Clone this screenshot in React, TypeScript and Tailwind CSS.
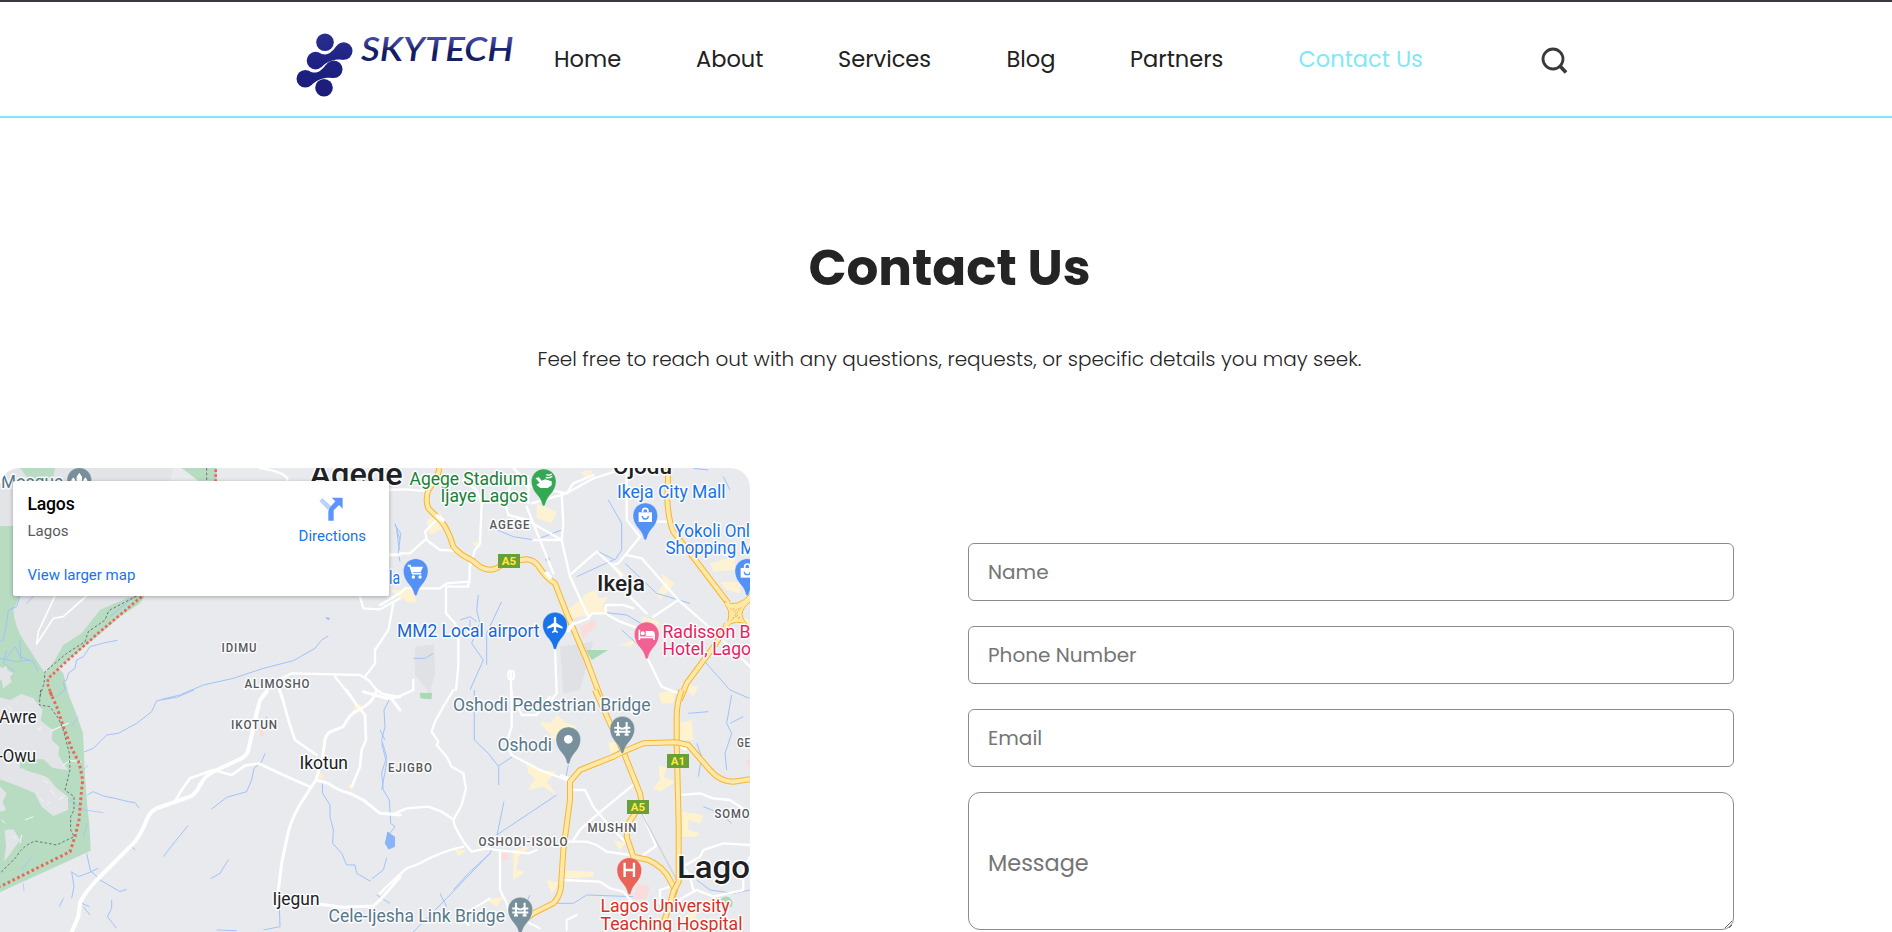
import type { ReactNode } from "react";

const POPPINS = "font-['Poppins','Inter',sans-serif]";

/* ---------- header ---------- */

function Logo() {
  return (
    <svg width="230" height="76" viewBox="290 26 230 76" className="block">
      <defs>
        <linearGradient id="mark" gradientUnits="userSpaceOnUse" x1="0" y1="33" x2="0" y2="97">
          <stop offset="0" stopColor="#2a2e90" />
          <stop offset="0.5" stopColor="#1d2180" />
          <stop offset="1" stopColor="#1a1e78" />
        </linearGradient>
        <linearGradient id="word" gradientUnits="userSpaceOnUse" x1="0" y1="36" x2="0" y2="62">
          <stop offset="0" stopColor="#4a4eaa" />
          <stop offset="0.3" stopColor="#34398f" />
          <stop offset="0.6" stopColor="#111a5e" />
          <stop offset="1" stopColor="#1b2168" />
        </linearGradient>
      </defs>
      <g fill="url(#mark)">
        <circle cx="325" cy="42.2" r="8.8" />
        <circle cx="324" cy="87.8" r="8.8" />
        <circle cx="343.7" cy="51" r="8.8" />
        <circle cx="315.5" cy="60.6" r="8.8" />
        <path d="M318 52.2C326 56.500 330 54.500 336.500 46L343.700 59.800C334 59 329 60.500 321 67.400Z" />
        <circle cx="333.7" cy="69.2" r="8.800" />
        <circle cx="305.3" cy="78.800" r="8.800" />
        <path d="M307.800 70.400C315.800 74.700 319.800 72.700 326.300 64.200L333.500 78C323.800 77.200 318.800 78.700 310.800 85.600Z" />
      </g>
      <text
        x="361"
        y="60.8"
        textLength="152.5"
        lengthAdjust="spacingAndGlyphs"
        fill="url(#word)"
        className="font-['Lato',sans-serif] text-[33px] font-semibold italic"
      >
        SKYTECH
      </text>
    </svg>
  );
}

const NAV = [
  { label: "Home", cls: "w-[142px] text-[#212121]" },
  { label: "About", cls: "w-[142px] text-[#212121]" },
  { label: "Services", cls: "w-[168.500px] text-[#212121]" },
  { label: "Blog", cls: "w-[123.500px] text-[#212121]" },
  { label: "Partners", cls: "w-[168.500px] text-[#212121]" },
  { label: "Contact Us", cls: "w-[242.500px] text-[#7de8fa]" },
];

function Header() {
  return (
    <header className="flex h-[118px] border-t-2 border-b-2 border-t-[#3b3841] border-b-[#7de8fa] pl-[290px]">
      <div className="mt-[24px] w-[264px] shrink-0">
        <Logo />
      </div>
      <nav className={`flex h-[114px] items-center pt-[2px] text-[22.500px] ${POPPINS}`}>
        {NAV.map((n) => (
          <a key={n.label} className={`block shrink-0 whitespace-nowrap ${n.cls}`}>
            {n.label}
          </a>
        ))}
      </nav>
      <svg width="28" height="28" viewBox="0 0 28 28" className="mt-[44px] block" fill="none" stroke="#3a3a3a">
        <circle cx="12" cy="13" r="10" strokeWidth="2.800" />
        <path d="M19 20L25 26.500" strokeWidth="3.600" />
      </svg>
    </header>
  );
}

/* ---------- map ---------- */

/* One quarter of the map, drawn at three units per pixel. */
function Tile({ x, y, children }: { x: number; y: number; children: ReactNode }) {
  return <g transform={`translate(${x} ${y}) scale(0.33333)`}>{children}</g>;
}

function Highway({ d, w = 18 }: { d: string; w?: number }) {
  return (
    <>
      <path d={d} stroke="#f9b52f" strokeWidth={w} fill="none" />
      <path d={d} stroke="#ffe8a8" strokeWidth={w - 6} fill="none" />
    </>
  );
}

function Pin({ x, y, color, children }: { x: number; y: number; color: string; children?: ReactNode }) {
  return (
    <g transform={`translate(${x} ${y}) scale(0.33333)`}>
      <path
        d="M0 74C-6 74 -4 62 -14 48C-22 37 -37 24 -37 0A37 37 0 0 1 37 0C37 24 22 37 14 48C4 62 6 74 0 74Z"
        fill={color}
        stroke="#fff"
        strokeOpacity="0.5"
        strokeWidth="2"
      />
      {children}
    </g>
  );
}

const BridgeGlyph = () => (
  <path
    d="M-13 -20V19M13 -20V19M-24 9H24M-13 -6Q0 6 13 -6M-24 -3H-13M13 -3H24M-19 18H-7M7 18H19"
    fill="none"
    stroke="#fff"
    strokeWidth="6"
  />
);

const BagGlyph = () => (
  <g>
    <path d="M-20 -9H20V20H-20Z" fill="#fff" />
    <path d="M-8 -9V-13A8 8 0 0 1 8 -13V-9" fill="none" stroke="#fff" strokeWidth="5" />
    <path d="M-9 2A9 9 0 0 0 9 2" fill="none" stroke="#5491f5" strokeWidth="4" />
  </g>
);

type Label = { t: string; x: number; y: number; w: number; k: keyof typeof KINDS };

const KINDS = {
  green: "fill-[#188038] text-[17.600px]",
  blue: "fill-[#1a73e8] text-[17.600px]",
  navy: "fill-[#1967d2] text-[17.600px]",
  pink: "fill-[#e91e63] text-[17.600px]",
  red: "fill-[#d93025] text-[17.600px]",
  slate: "fill-[#57788a] text-[17.600px]",
  area: "fill-[#55585c] text-[12px] font-medium tracking-[1px]",
  town: "fill-[#202124] text-[17.800px]",
  city: "fill-[#202124] text-[22px] font-medium",
  big: "fill-[#202124] text-[32px] font-medium",
};

const LABELS: Label[] = [
  { t: "Mosque", x: 1, y: 488, w: 62, k: "slate" },
  { t: "Agege", x: 309.5, y: 484.5, w: 93, k: "big" },
  { t: "Ojodu", x: 613, y: 474, w: 59, k: "city" },
  { t: "Agege Stadium", x: 409.5, y: 484.7, w: 118.5, k: "green" },
  { t: "Ijaye Lagos", x: 440.5, y: 502, w: 87.5, k: "green" },
  { t: "AGEGE", x: 489.5, y: 529, w: 41, k: "area" },
  { t: "Ikeja City Mall", x: 617, y: 498, w: 108.5, k: "blue" },
  { t: "Yokoli Onl", x: 674.5, y: 536.7, w: 75.5, k: "blue" },
  { t: "Shopping M", x: 665.5, y: 554.3, w: 89.5, k: "blue" },
  { t: "Ikeja", x: 597, y: 591, w: 48, k: "city" },
  { t: "la", x: 389, y: 583.7, w: 11, k: "blue" },
  { t: "MM2 Local airport", x: 397, y: 637, w: 142.5, k: "navy" },
  { t: "Radisson B", x: 662.5, y: 638, w: 88, k: "pink" },
  { t: "Hotel, Lago", x: 662.5, y: 655.3, w: 88.5, k: "pink" },
  { t: "IDIMU", x: 221.5, y: 652.3, w: 36, k: "area" },
  { t: "ALIMOSHO", x: 244.5, y: 688.2, w: 66, k: "area" },
  { t: "IKOTUN", x: 231, y: 729.4, w: 47, k: "area" },
  { t: "EJIGBO", x: 388, y: 772, w: 45, k: "area" },
  { t: "Awre", x: -1, y: 722.5, w: 37.5, k: "town" },
  { t: "-Owu", x: -2, y: 761.5, w: 38, k: "town" },
  { t: "Ikotun", x: 299.5, y: 768.5, w: 48.5, k: "town" },
  { t: "Ijegun", x: 272.5, y: 904.5, w: 47, k: "town" },
  { t: "Cele-Ijesha Link Bridge", x: 328.5, y: 922.3, w: 176.5, k: "slate" },
  { t: "Oshodi Pedestrian Bridge", x: 453, y: 710.9, w: 197.5, k: "slate" },
  { t: "Oshodi", x: 497.5, y: 751.3, w: 54.5, k: "slate" },
  { t: "OSHODI-ISOLO", x: 478.5, y: 846.4, w: 90, k: "area" },
  { t: "MUSHIN", x: 587.5, y: 832, w: 50, k: "area" },
  { t: "SOMO", x: 714.5, y: 817.5, w: 36, k: "area" },
  { t: "GE", x: 737, y: 747.2, w: 14, k: "area" },
  { t: "Lago", x: 677, y: 878.2, w: 73, k: "big" },
  { t: "Lagos University", x: 600.5, y: 912.3, w: 129, k: "red" },
  { t: "Teaching Hospital", x: 600.5, y: 929.7, w: 142, k: "red" },
];

function Badge({ x, y, t }: { x: number; y: number; t: string }) {
  return (
    <g>
      <rect x={x} y={y} width="22" height="14" fill="#689f38" />
      <text
        x={x + 11}
        y={y + 11}
        textAnchor="middle"
        className="fill-[#ffeb3b] font-['Roboto',sans-serif] text-[11.500px] font-bold"
      >
        {t}
      </text>
    </g>
  );
}

function MapCanvas() {
  return (
    <svg width="750" height="464" viewBox="0 468 750 464" className="block" strokeLinejoin="round">
      <rect x="0" y="468" width="750" height="464" fill="#e8eaed" />

      {/* terrain */}
      <Tile x={0} y={460}>
        <path d="M0 24H520L480 200L420 408L260 540L160 640L0 620Z" fill="#e3e4e8" />
        <path d="M0 198H60V408L40 450Q44 500 70 540L115 610L135 640L165 600L190 555L245 520L300 450L380 415L440 400L420 430L360 470L290 530L175 625L190 640L210 720H0V660L20 640L10 620L0 640Z" fill="#b7dcc1" />
        <path d="M545 24H650V62H595ZM60 24H165L160 50L130 62L80 50Z" fill="#b7dcc1" />
        <path d="M0 640L18 615L35 665L10 685ZM40 715L75 700L125 720Z" fill="#e3e4e8" />
        <path d="M0 660L30 650L40 640L0 620Z" fill="#e3e4e8" />
      </Tile>
      <Tile x={0} y={690}>
        <path d="M0 0H200L228 70L249 130L255 260L262 350L268 400L272 482L0 607Z" fill="#b7dcc1" />
        <path d="M0 22L30 30L65 12L100 25L128 60L122 92L158 120L155 150L178 170L175 195L190 220L205 240L150 235L130 215L60 210L60 235L110 240L145 265L170 290L204 320V360L160 378L125 350L105 310L60 290L0 268Z" fill="#e3e4e8" />
        <path d="M60 208H130L155 232L190 240L205 290L204 320L165 290L145 262L75 240Z" fill="#b7dcc1" />
        <path d="M0 290L20 310L8 335L18 360L0 365ZM14 420L40 418L60 450L35 485L12 515L18 470Z" fill="#e3e4e8" />
        <path d="M112 118L125 112M118 125L122 120M25 48L35 58L30 65M130 270L145 280M150 300L165 315M175 330L190 320M120 325L130 335M140 345L150 335M40 440L50 445M5 390L15 400M65 435L60 460M75 390L100 380" fill="none" stroke="#f4f5f6" strokeWidth="3" />
      </Tile>

      {/* built-up patches */}
      <Tile x={380} y={460}>
        <path d="M105 560L162 553L165 640L150 700L105 645ZM540 560L640 545L600 690L550 700Z" fill="#dfe1e5" />
        <path d="M618 570L685 570L635 600ZM120 700L155 698V718L122 715Z" fill="#a9dab5" />
        <path d="M600 500L640 480L650 495L610 535Z" fill="#fbdcdc" />
        <path d="M575 440L600 420L620 400L650 390L655 415L685 410L665 440L690 450L660 462L625 465L580 475L550 455ZM470 130L530 155L515 190L470 175ZM845 340L885 370L840 420L830 400L850 375ZM990 310L1065 290V330L1000 335ZM1020 365H1080V400L1040 390ZM790 470L840 485L820 520L780 505ZM720 555L785 530L750 560ZM30 390L100 390L110 430L80 425ZM140 180L180 160L200 200L150 225ZM275 250L305 240L300 265ZM600 35L640 30L625 60ZM1080 470L1110 480V520ZM900 670L955 680L940 710ZM700 310L740 350L715 345Z" fill="#fff3cf" opacity="0.9" />
      </Tile>
      <Tile x={380} y={690}>
        <path d="M480 95L515 98L530 75L560 100L590 110L575 145L550 130L520 150L510 130L485 105ZM440 225L490 240L530 245L500 275L530 315L490 290L445 300L465 265L445 250ZM835 225L860 235L850 260L885 275L840 305L820 295L840 270ZM905 365L970 375L960 400L925 390L925 420L960 430L950 440L905 440ZM400 480L450 470L415 500L410 540L435 545L400 570ZM530 540L640 545V560L560 565ZM500 570L540 580L515 610ZM900 100L935 90L940 150L900 150ZM835 10L885 0L880 40L845 40ZM700 450L735 460L720 480ZM685 155L715 160V190L690 185ZM225 480L260 480L235 500ZM320 630L370 620L350 650ZM900 690L950 650L945 700Z" fill="#fff3cf" />
        <path d="M360 490H385V510L365 512ZM770 580L810 590L800 625L760 630ZM1095 215L1110 205V240Z" fill="#fbdcdc" />
        <path d="M120 8L158 10L150 28L122 24ZM1020 630A20 20 0 0 1 1055 650L1030 660Z" fill="#a9dab5" />
      </Tile>
      <Tile x={0} y={690}>
        <path d="M955 245L975 262L950 270ZM1062 45L1080 40L1092 65L1060 68ZM1045 280L1060 290L1050 305Z" fill="#ffeecb" />
        <path d="M777 120H792V138L780 140Z" fill="#fbdcdc" />
      </Tile>

      {/* water */}
      <Tile x={0} y={460}>
        <g fill="none" stroke="#a1c2fa" strokeWidth="3">
          <path d="M485 718L540 705L610 675L700 655L790 625L880 602L945 565L965 540L985 528" />
          <path d="M352 541L315 548L270 560L250 590L230 600L225 625L205 640L200 660L190 665L195 690L170 710" />
          <path d="M60 408L50 440L25 450L20 490L10 540L0 545M15 600L45 560L60 590L100 605L115 635M0 595L50 605L90 600M20 570L10 610L45 635M60 540L62 600" />
          <path d="M1185 190L1200 240M1198 270L1190 210" />
          <path d="M405 408L330 470M100 408L80 430" />
        </g>
        <path d="M975 472L990 474L985 480ZM1025 482L1033 477Z" fill="#8ab4f8" />
      </Tile>
      <Tile x={380} y={460}>
        <g fill="none" stroke="#a1c2fa" strokeWidth="3">
          <path d="M45 195L62 220L55 280L60 305M340 205L400 230L465 240L545 210M685 120L725 190V270L705 300L655 275M365 425L320 520V615M295 405L290 450L300 490L275 550L310 600L270 690M240 480L270 470L290 485M100 595L135 595L160 580" />
          <path d="M680 458L740 465L800 500M735 310L830 400L930 430M870 555L960 560L970 600L1050 690L1108 715M940 25L985 30M1030 50L1050 90M590 350L700 300M270 480V520" />
          <path d="M725 510L770 550" />
        </g>
        <circle cx="503" cy="298" r="6" fill="#8ab4f8" />
      </Tile>
      <Tile x={0} y={690}>
        <g fill="none" stroke="#a1c2fa" strokeWidth="3">
          <path d="M582 0L530 22L470 32L455 65L410 100L355 130L320 135L280 175L252 186" />
          <path d="M262 315L280 305L310 318L345 325L385 335L405 338L418 355" />
          <path d="M795 190L785 215L762 235L755 270L740 305L680 322L635 357" />
          <path d="M564 407L525 455L490 500M686 508L660 550L632 566M397 472L406 480" />
          <path d="M967 280L968 310L990 345L990 380L1000 420L998 460L1025 490L1040 525L1065 525L1070 550L1112 574" />
          <path d="M1170 25L1152 60L1155 110L1145 150L1160 200L1145 250L1150 300L1168 330L1172 400L1185 410L1170 430M1160 503L1150 540L1115 567" />
          <path d="M215 545L235 560L275 545L300 570L360 605L380 598M215 545L222 590L215 625M260 490L272 545L295 535M190 625L178 650M245 640L268 650M250 650L270 675M335 630V655L322 680L350 715M838 650L840 710L790 720M650 720L710 722M800 80L795 110" />
          <path d="M205 330L255 360L310 368M235 80L215 110M265 225L245 245M250 440L262 400M70 580L72 605M95 500L65 540" opacity="0.7" />
          <path d="M1130 615L1170 640" />
        </g>
        <path d="M1165 425L1180 440V470L1165 478L1155 460Z" fill="#8ab4f8" />
      </Tile>
      <Tile x={380} y={690}>
        <g fill="none" stroke="#a1c2fa" strokeWidth="3">
          <path d="M283 0V150L325 190L356 230V285M356 228L405 195M565 225L558 260M530 315L350 435M372 335L350 440L330 490L200 625L100 726" />
          <path d="M330 490L265 550L220 600M500 640L580 640L620 615L760 620M450 615L420 680M200 650L180 610M1055 15L1040 100L1055 130L1035 190L1040 240M950 160L965 200L955 260M925 70L985 65M1050 100L1090 80M1110 600L1060 610L990 600L950 570M970 350L1020 370L1055 400M0 120L15 150M5 160L20 220L5 300" />
        </g>
        <path d="M22 425L45 440V470L28 478L15 460Z" fill="#8ab4f8" />
      </Tile>

      {/* local roads */}
      <Tile x={0} y={460}>
        <g fill="none" stroke="#fff" strokeLinecap="round">
          <path d="M780 24Q850 35 862 55V64M1080 410L1090 445L1140 448L1200 415M1180 430L1165 510L1125 570V610L1095 650" strokeWidth="7" />
          <path d="M780 720Q800 680 845 655L875 640L1080 645L1105 660L1130 690L1170 715M1005 650L1060 720M840 690L850 720" strokeWidth="7" />
          <path d="M1168 282H1200M260 408L190 470L160 475L110 552L115 515L165 408" strokeWidth="5" />
        </g>
        <path d="M620 24V60M410 408L330 450L325 455L315 480L265 515L255 545L200 580L135 635L132 670L118 715" fill="none" stroke="#6c7176" strokeWidth="3" strokeDasharray="8 6" />
        <path d="M425 410L300 515L215 590L145 655L142 670L158 715M647 28V64" fill="none" stroke="#e8685a" strokeWidth="8" strokeDasharray="8 7" />
      </Tile>
      <Tile x={380} y={460}>
        <g fill="none" stroke="#fff" strokeLinecap="round">
          <path d="M0 90L80 88L150 95M150 60L130 45M60 280H90L140 235L135 215L180 170M140 240L180 270L225 272M0 285H60M0 435L60 400L75 385H180L200 370L265 365V380H198V460L225 490L235 540V620L228 690M270 310L268 370M250 60L290 90L305 130L300 250L285 270L270 320M400 24L455 80L560 100L640 55L740 24M545 100L550 190L545 240L570 350L625 470M375 130L385 165L440 180L545 240M440 140L480 240L520 340M460 240H545M740 24V180L780 230L740 280L715 310L695 315L650 275L575 340M690 310L720 340L740 400L800 460M740 285L785 295L895 420L820 470M895 420L975 490L1110 620M575 495L625 475L635 460H675L720 485L790 510M677 460V435H730L760 445M800 590L830 650L845 680L895 700M525 565L530 700L515 720M393 635V720M0 700L55 710L100 690V660M860 185H805M455 130L560 100L580 70L640 45M380 130L395 50M445 50V130" strokeWidth="7" />
          <path d="M393 632A8 8 0 0 1 402 640V650A8 8 0 0 1 385 650V640A8 8 0 0 1 393 632" strokeWidth="6" />
        </g>
      </Tile>
      <Tile x={0} y={690}>
        <g fill="none" stroke="#fff" strokeLinecap="round">
          <path d="M215 726L235 680L240 640Q245 620 290 570L400 460Q420 440 440 390Q450 365 470 355L570 320Q590 310 600 285Q615 255 650 240L715 210Q740 200 745 180L770 70L780 30L800 5" strokeWidth="12" />
          <path d="M525 335L545 300L570 265L640 240L695 255L735 227L775 220L850 255L930 290M838 0L850 35L865 90L885 150L950 195M1040 0L1070 45L1095 75L1098 150L1085 180L1080 230L1055 290" strokeWidth="8" />
          <path d="M1130 0Q1120 40 1075 60Q1050 70 1030 110L1000 122Q980 125 975 150L968 200L948 270L915 320Q880 370 865 425L845 520L835 600M950 270L985 280Q1010 300 1050 310L1090 330L1140 370L1200 375M1090 5L1160 25L1200 20M1170 20L1200 60M955 642L1030 652L1120 648L1145 625L1200 560" strokeWidth="9" />
          <path d="M155 122L205 100M190 225L210 212L243 215" strokeWidth="3" />
        </g>
        <path d="M122 0L118 45L150 50L175 85L190 120L208 190L210 240L195 300L222 320V360L212 380V420L222 440L170 465L105 453Q65 470 50 500L0 550" fill="none" stroke="#6c7176" strokeWidth="3" strokeDasharray="8 6" />
        <path d="M150 5L170 50L190 110L215 175L238 220L248 270L243 320L237 390L225 440L210 485L120 530L0 590" fill="none" stroke="#e8685a" strokeWidth="9" strokeDasharray="8 8" />
      </Tile>
      <Tile x={380} y={690}>
        <g fill="none" stroke="#fff" strokeLinecap="round">
          <path d="M220 0L190 50L165 95L155 125L175 155L170 165L200 200L215 230L250 250L258 295L245 345L220 390L225 410L250 455L275 485L320 475L350 480L445 490L470 480M0 370L40 372L80 355L145 350L185 365L215 385M250 470Q180 485 120 520L80 535L20 590L0 610M360 485V600L380 640L390 680M395 0V110L380 160L395 195L480 240L560 270M405 30L425 75H470L510 20M575 300H615L640 350L690 410L745 465M765 280L680 350Q620 400 600 420L580 450M560 455L620 455L650 465L680 485L750 495M790 375L828 468L790 495L790 505M550 570L660 575L690 595L730 605L760 640M900 315L960 310L1000 325L1050 330L1110 370M900 535L960 500L970 480L1030 460L1110 465M895 630L950 600L1000 620L1090 600V540L1110 500M840 640V600L870 590M940 600L930 560L910 530" strokeWidth="7" />
          <path d="M545 258L575 272M705 200L735 190M890 160L915 175" strokeWidth="12" />
          <path d="M330 625L240 680L265 705M430 690L480 715M560 720V690L590 675" strokeWidth="6" />
        </g>
        <path d="M785 370L890 570" stroke="#cfd2d6" strokeWidth="4" />
      </Tile>

      {/* highways */}
      <Tile x={380} y={460}>
        <Highway d="M178 24L172 50L145 90Q135 120 145 145L185 185Q205 210 220 260Q240 285 275 300L300 320Q325 335 350 325L380 305L440 298Q465 300 480 325Q500 355 525 370L560 460L620 600L665 720" />
        <Highway d="M865 24L862 120Q865 180 880 215L940 292L1045 430" />
        <Highway d="M1042 492L1005 555L920 670L900 720" />
        <path
          d="M1032 424Q1072 446 1112 400V425Q1088 442 1086 462Q1088 482 1110 500Q1068 470 1034 506Q1050 475 1045 452Z"
          fill="#ffe8a8"
          stroke="#f9b52f"
          strokeWidth="3"
        />
        <path d="M1040 427L1046 436M1036 500L1046 486" stroke="#ffe8a8" strokeWidth="13" />
        <path
          d="M1052 445L1084 478M1084 442L1054 482M1060 444A8 7 0 0 0 1076 444M1060 476A8 7 0 0 1 1076 476"
          fill="none"
          stroke="#f3ae3a"
          strokeWidth="3"
          strokeDasharray="5 4"
        />
        <path d="M172 168L188 180M500 340L510 352M565 510L580 490" stroke="#fff" strokeWidth="12" strokeLinecap="round" />
      </Tile>
      <Tile x={380} y={690}>
        <Highway d="M645 0L690 100L730 185L780 310L785 340L745 400L740 440L760 500L805 510Q850 530 870 570L885 600L850 700" />
        <Highway d="M905 0Q890 40 890 80V160L896 400V575L880 605L868 650" />
        <Highway d="M420 710Q435 685 460 670L520 640Q540 620 543 590L550 480L570 330V275L600 240L700 200L730 185L790 160L890 157L925 165L990 240Q1020 275 1060 275L1110 268" />
      </Tile>

      <Badge x={498} y={554} t="A5" />
      <Badge x={667} y={754} t="A1" />
      <Badge x={627} y={800} t="A5" />

      {LABELS.map((l) => (
        <text
          key={l.t}
          x={l.x}
          y={l.y}
          textLength={l.w}
          lengthAdjust="spacingAndGlyphs"
          stroke="#fff"
          strokeOpacity="0.9"
          strokeWidth="3"
          paintOrder="stroke"
          className={`font-['Roboto',sans-serif] ${KINDS[l.k]}`}
        >
          {l.t}
        </text>
      ))}

      <Pin x={79.3} y={480} color="#78909c">
        <path d="M-24 18V0L-18 -8L-12 0V18ZM-8 18V-10L0 -22L8 -10V18ZM12 18V0L18 -8L24 0V18Z" fill="#fff" />
      </Pin>
      <Pin x={543.7} y={481.3} color="#34a853">
        <path d="M-25 -10L-14 -12L-6 -2L4 -6L24 0V12L12 20H-10L-22 10L-12 4Z" fill="#fff" />
        <path d="M6 -12Q14 -8 26 -15M8 -20Q16 -16 24 -22" stroke="#fff" strokeWidth="4" fill="none" />
      </Pin>
      <Pin x={645.3} y={515.3} color="#5491f5"><BagGlyph /></Pin>
      <Pin x={747.3} y={571} color="#5491f5"><BagGlyph /></Pin>
      <Pin x={415.7} y={571} color="#5491f5">
        <path d="M-24 -16H-17L-9 8H17" fill="none" stroke="#fff" strokeWidth="5" />
        <path d="M-16 -13H22L15 3H-10Z" fill="#fff" />
        <circle cx="-7" cy="18" r="5" fill="#fff" />
        <circle cx="13" cy="18" r="5" fill="#fff" />
      </Pin>
      <Pin x={555} y={624.7} color="#1a73e8">
        <path d="M-3.500 -20Q0 -27 3.500 -20V-6L23 7V12L3.500 6V17L9 21V25L0 22L-9 25V21L-3.500 17V6L-23 12V7L-3.500 -6Z" fill="#fff" />
      </Pin>
      <Pin x={646.7} y={634.3} color="#f06292">
        <path d="M-22 -14V17M-22 9H22M22 17V0" stroke="#fff" strokeWidth="5" fill="none" />
        <path d="M-3 -10H16Q24 -10 24 0V5H-3Z" fill="#fff" />
        <circle cx="-12" cy="-3" r="6" fill="#fff" />
      </Pin>
      <Pin x={568.3} y={739.3} color="#78909c"><circle cx="0" cy="0" r="13" fill="#fff" /></Pin>
      <Pin x={622.3} y={728.7} color="#78909c"><BridgeGlyph /></Pin>
      <Pin x={520.3} y={909.5} color="#78909c"><BridgeGlyph /></Pin>
      <Pin x={629.3} y={870} color="#ea6358">
        <path d="M-14 -22V21M14 -22V21M-14 0H14" stroke="#fff" strokeWidth="7" />
      </Pin>
    </svg>
  );
}

function MapCard() {
  return (
    <div className="absolute top-[13px] left-[13px] flex h-[115px] w-[376px] justify-between rounded-[2px] bg-white pl-[14.500px] font-['Roboto',sans-serif] shadow-[0_1px_4px_rgba(0,0,0,0.3)]">
      <div className="flex flex-col whitespace-nowrap">
        <span className="mt-[12px] text-[17.600px] leading-[22px] font-medium tracking-[-0.200px] text-black">Lagos</span>
        <span className="mt-[6px] text-[15px] leading-[20px] text-[#5b5b5b]">Lagos</span>
        <span className="mt-[24px] text-[15px] leading-[20px] text-[#1a73e8]">View larger map</span>
      </div>
      <div className="mr-[23px] flex flex-col items-center">
        <svg width="24" height="24" viewBox="0 0 72 72" className="mt-[16px] mr-[2px] block">
          <path d="M10 3L1 12L26 38L37 28Z" fill="#bbd2fc" />
          <path d="M38 2H71V35L60 24L44 40V71H28V45Q28 36 34 30L49 13Z" fill="#5e94ff" />
        </svg>
        <span className="mt-[5px] text-[15px] leading-[20px] text-[#1a73e8]">Directions</span>
      </div>
    </div>
  );
}

/* ---------- page ---------- */

const FIELD =
  "block h-[58px] w-full rounded-[6px] border border-[#8c8c8c] bg-white px-[19px] text-[20px] outline-none placeholder:text-[#757575]";

export default function App() {
  return (
    <div className="h-[932px] w-full overflow-hidden bg-white">
      <Header />
      <section className={`flex h-[350px] flex-col items-center pl-[7px] ${POPPINS}`}>
        <h1 className="mt-[120px] text-[50px] leading-[60px] font-bold whitespace-nowrap text-[#242424]">
          Contact Us
        </h1>
        <p className="mt-[47px] text-[20px] leading-[28px] font-light whitespace-nowrap text-[#242424]">
          Feel free to reach out with any questions, requests, or specific details you may seek.
        </p>
      </section>
      <main className="flex items-start">
        <div className="relative h-[620px] w-[750px] shrink-0 overflow-hidden rounded-[20px]">
          <MapCanvas />
          <MapCard />
        </div>
        <form className={`mt-[75px] ml-[218px] flex w-[766px] flex-col gap-[25px] ${POPPINS}`}>
          <input className={FIELD} placeholder="Name" />
          <input className={FIELD} placeholder="Phone Number" />
          <input className={FIELD} placeholder="Email" />
          <textarea
            className="block h-[138px] w-full rounded-[12px] border border-[#8c8c8c] bg-white px-[19px] pt-[54px] text-[22.400px] leading-[32px] outline-none placeholder:text-[#757575]"
            placeholder="Message"
          />
        </form>
      </main>
    </div>
  );
}
